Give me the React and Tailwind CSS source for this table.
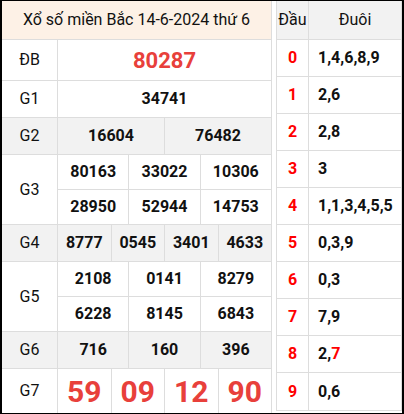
import React from 'react'

const rows = [
  { label: 'G1', lines: [['34741']], h: 'h-[37px]' },
  { label: 'G2', lines: [['16604', '76482']], h: 'h-[37px]', gray: true },
  { label: 'G3', lines: [['80163', '33022', '10306'], ['28950', '52944', '14753']], h: 'h-[70px]' },
  { label: 'G4', lines: [['8777', '0545', '3401', '4633']], h: 'h-[37px]', gray: true },
  { label: 'G5', lines: [['2108', '0141', '8279'], ['6228', '8145', '6843']], h: 'h-[70px]' },
  { label: 'G6', lines: [['716', '160', '396']], h: 'h-[37px]', gray: true },
]

const loto = [
  ['0', '1,4,6,8,9'],
  ['1', '2,6'],
  ['2', '2,8'],
  ['3', '3'],
  ['4', '1,1,3,4,5,5'],
  ['5', '0,3,9'],
  ['6', '0,3'],
  ['7', '7,9'],
  ['8', null],
  ['9', '0,6'],
]

function Line({ nums, first, last }) {
  return (
    <div className={`flex ${first && !last ? 'h-[35px] border-b border-[#ddd]' : 'flex-1'}`}>
      {nums.map((n, i) => (
        <div
          key={i}
          className={`flex-1 flex items-center justify-center font-bold text-[16px] text-[#111] ${i < nums.length - 1 ? 'border-r border-[#ddd]' : ''}`}
        >
          {n}
        </div>
      ))}
    </div>
  )
}

export default function App() {
  return (
    <div
      className="w-[404px] h-[414px] flex bg-white border-black border-t border-b border-l-2 border-r-2 text-[#111]"
      style={{ fontFamily: 'Roboto, "Noto Sans", sans-serif' }}
    >
      {/* Left: results */}
      <div className="w-[270px] flex flex-col border-r border-[#ddd]">
        <div className="h-[39px] flex items-center justify-center bg-[#fdf1e6] border-b border-[#ddd] text-[16px]">
          Xổ số miền Bắc 14-6-2024 thứ 6
        </div>

        <div className="h-[41px] flex border-b border-[#ddd]">
          <div className="w-[56px] flex items-center justify-center border-r border-[#ddd] text-[16px]">ĐB</div>
          <div className="flex-1 flex items-center justify-center font-bold text-[22px] text-[#e8403b]">80287</div>
        </div>

        {rows.map((r) => (
          <div key={r.label} className={`${r.h} flex border-b border-[#ddd] ${r.gray ? 'bg-[#f2f2f2]' : ''}`}>
            <div className="w-[56px] flex items-center justify-center border-r border-[#ddd] text-[16px]">{r.label}</div>
            <div className="flex-1 flex flex-col">
              {r.lines.map((l, i) => (
                <Line key={i} nums={l} first={i === 0} last={i === r.lines.length - 1} />
              ))}
            </div>
          </div>
        ))}

        <div className="h-[44px] flex">
          <div className="w-[56px] flex items-center justify-center border-r border-[#ddd] text-[16px]">G7</div>
          <div className="flex-1 flex">
            {['59', '09', '12', '90'].map((n, i) => (
              <div
                key={n}
                className={`flex-1 flex items-center justify-center font-bold text-[30px] text-[#e8403b] ${i < 3 ? 'border-r border-[#ddd]' : ''}`}
              >
                {n}
              </div>
            ))}
          </div>
        </div>
      </div>

      {/* Right: loto table */}
      <div className="ml-[4px] w-[126px] self-start flex flex-col border-l border-r border-b border-[#ddd]">
        <div className="h-[39px] flex bg-[#f2f2f2] border-b border-[#ddd] text-[16px]">
          <div className="w-[32px] flex items-center justify-center border-r border-[#ddd]">Đầu</div>
          <div className="flex-1 flex items-center justify-center">Đuôi</div>
        </div>
        {loto.map(([d, v], i) => (
          <div key={d} className={`h-[37px] flex ${i < loto.length - 1 ? 'border-b border-[#ddd]' : 'h-[36px]'}`}>
            <div className="w-[32px] flex items-center justify-center border-r border-[#ddd] font-bold text-[16px] text-[#ff0000]">{d}</div>
            <div className="flex-1 flex items-center pl-[9px] font-bold text-[16px]">
              {v ?? (
                <>
                  2,<span className="text-[#ff0000]">7</span>
                </>
              )}
            </div>
          </div>
        ))}
      </div>
    </div>
  )
}
